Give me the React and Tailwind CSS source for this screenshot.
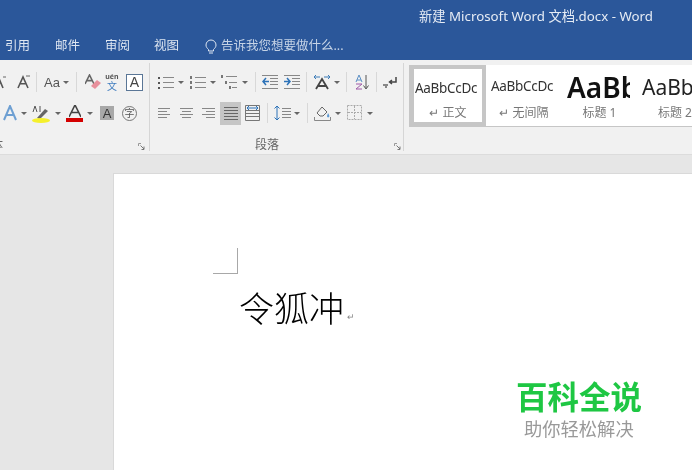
import React from "react";

const cjk = "font-['Noto_Sans','Noto_Sans_CJK_SC',sans-serif]";

const Caret = ({ className = "" }) => (
  <svg width="6" height="3" viewBox="0 0 6 3" className={`shrink-0 ${className}`}>
    <path d="M0 0h6L3 3z" fill="#666" />
  </svg>
);

const Sep = ({ className = "" }) => <div className={`w-px h-[20px] bg-[#d8d8d8] shrink-0 ${className}`} />;

const Icon = ({ w, h = 16, className = "", children }) => (
  <svg width={w} height={h} viewBox={`0 0 ${w} ${h}`} fill="none" className={`shrink-0 ${className}`}>
    {children}
  </svg>
);

const LetterA = ({ color = "#555", x = 0, w = 12, h = 13, y = 1 }) => (
  <path d={`M${x} ${y + h}L${x + w / 2} ${y}L${x + w} ${y + h}M${x + w * 0.2} ${y + h * 0.62}H${x + w * 0.8}`} stroke={color} strokeWidth="1.6" />
);

const Lines = ({ x = 0, w = 13, ys = [3, 6, 9, 12], widths, color = "#888" }) => (
  <>
    {ys.map((y, i) => (
      <path key={y} d={`M${x} ${y + 0.5}h${widths ? widths[i] : w}`} stroke={color} />
    ))}
  </>
);

const Launcher = ({ className = "" }) => (
  <svg width="7" height="7" viewBox="0 0 7 7" fill="none" className={`shrink-0 ${className}`}>
    <path d="M.5 3V.5H3M4 .5" stroke="#999" />
    <path d="M2.5 2.5L6 6M6 3.5V6.500H3.500" stroke="#777" />
  </svg>
);

function StyleItem({ selected, sample, label, box }) {
  return (
    <div className={`h-[61px] flex flex-col items-center shrink-0 ${box} ${selected ? "border-[4px] border-[#c6c6c6] bg-white" : ""}`}>
      <div className={`w-full h-[37px] flex items-center overflow-hidden whitespace-nowrap ${selected ? "pt-[1px] pl-[1px]" : "pt-[6px] pl-[5px]"}`}>
        {sample}
      </div>
      <div className={`text-[12px] leading-none text-[#777] whitespace-nowrap ${selected ? "mt-[1px]" : "mt-[5px]"} ${cjk}`}>{label}</div>
    </div>
  );
}

export default function App() {
  return (
    <div className={`w-[692px] h-[470px] overflow-hidden bg-[#e6e6e6] relative blur-[0.35px] ${cjk}`}>
      {/* Title bar and tabs */}
      <header className="h-[60px] bg-[#2b579a] text-[#dfe7f2] flex flex-col">
        <div className="h-[33px] pl-[419px] pt-[7px] text-[13.3px] leading-[18px] whitespace-nowrap text-[#e6ecf5]">
          新建 Microsoft Word 文档.docx - Word
        </div>
        <nav className="flex items-center h-[26px] text-[12.5px] whitespace-nowrap pl-[5px]">
          <span className="w-[50px]">引用</span>
          <span className="w-[50px]">邮件</span>
          <span className="w-[49px]">审阅</span>
          <span className="w-[51px]">视图</span>
          <Icon w={12} h={15}>
            <path d="M3.500 10.500C2 9 1 8 1 6a5 5 0 0 1 10 0c0 2-1 3-2.500 4.500V12h-5zM4 14h4" stroke="#dfe7f2" />
          </Icon>
          <span className="ml-[4px] text-[#c5d3e6] text-[12.500px]">告诉我您想要做什么...</span>
        </nav>
      </header>

      {/* Ribbon */}
      <section className="h-[95px] bg-[#f1f1f1] border-b border-[#dcdcdc] flex">
        {/* Font group */}
        <div className="w-[150px] shrink-0 border-r border-[#d6d6d6] my-[3px] flex flex-col overflow-hidden relative">
          <div className="h-[30px] mt-[4px] flex items-center">
            <Icon w={14} className="ml-[-8px]">
              <LetterA x={0} w={11} />
              <path d="M11 3h3" stroke="#666" />
            </Icon>
            <Icon w={14} className="ml-[11px]">
              <LetterA x={1} w={10} y={3} h={11} />
              <path d="M9 2h4" stroke="#666" />
            </Icon>
            <Sep className="ml-[5px]" />
            <span className="ml-[7px] text-[13px] leading-none text-[#555] font-['Liberation_Sans',sans-serif]">Aa</span>
            <Caret className="ml-[3px]" />
            <Sep className="ml-[7px]" />
            <Icon w={17} className="ml-[8px]">
              <LetterA x={0} w={9} h={9} color="#666" />
              <path d="M6 12l6-6 4 3-6 6z" fill="#e8909c" />
            </Icon>
            <div className="ml-[3px] w-[14px] flex flex-col items-center">
              <span className="text-[7px] leading-[8px] font-bold text-[#555]">uén</span>
              <span className="text-[10px] leading-[11px] text-[#3f7cbf]">文</span>
            </div>
            <div className="ml-[7px] w-[17px] h-[17px] border border-[#5a7696] bg-white flex items-center justify-center text-[14px] leading-none text-[#444] font-['Liberation_Sans',sans-serif]">A</div>
          </div>
          <div className="h-[30px] mt-[1px] flex items-center">
            <Icon w={14} className="ml-[3px]">
              <path d="M1 15L7 1l6 14M4 10h6" stroke="#6d9fd2" strokeWidth="2" />
            </Icon>
            <Caret className="ml-[4px]" />
            <Icon w={18} h={20} className="ml-[5px]">
              <path d="M5 15l8-9 3 2-8 8z" fill="#666" />
              <path d="M1 9l2-6 2 6M8 3v6" stroke="#555" />
              <ellipse cx="9" cy="17.500" rx="9" ry="2.500" fill="#f5f02c" />
            </Icon>
            <Caret className="ml-[5px]" />
            <div className="ml-[5px] w-[17px] flex flex-col items-center">
              <Icon w={12} h={13}>
                <LetterA x={0} w={12} y={0} h={12} color="#444" />
              </Icon>
              <div className="w-[17px] h-[4px] bg-[#d40000]" />
            </div>
            <Caret className="ml-[4px]" />
            <div className="ml-[7px] w-[14px] h-[14px] bg-[#a8a8a8] flex items-center justify-center text-[13px] leading-none text-[#333] font-['Liberation_Sans',sans-serif]">A</div>
            <div className="ml-[8px] w-[15px] h-[15px] rounded-full border border-[#777] flex items-center justify-center text-[10px] leading-none text-[#555]">字</div>
          </div>
          <div className="flex-1 flex items-center justify-between pr-[4px] pt-[10px]">
            <span className="ml-[-9px] text-[12px] leading-none text-[#666]">体</span>
            <Launcher className="mt-[4px]" />
          </div>
        </div>

        {/* Paragraph group */}
        <div className="w-[254px] shrink-0 border-r border-[#d6d6d6] my-[3px] flex flex-col">
          <div className="h-[30px] mt-[4px] flex items-center">
            <Icon w={17} className="ml-[7px]">
              <path d="M1 3h2v2H1zM1 8h2v2H1zM1 13h2v2H1z" fill="#555" />
              <Lines x={6} w={11} ys={[3, 8, 13]} />
            </Icon>
            <Caret className="ml-[4px]" />
            <Icon w={17} className="ml-[5px]">
              <path d="M1 2h2v3H1zM1 7h2v3H1zM1 12h2v3H1z" fill="#777" />
              <Lines x={6} w={11} ys={[3, 8, 13]} />
            </Icon>
            <Caret className="ml-[4px]" />
            <Icon w={17} className="ml-[5px]">
              <path d="M0 1h2v3H0zM4 7h2v3H4zM8 12h2v3H8z" fill="#777" />
              <Lines ys={[2, 8, 13]} x={5} widths={[11, 0, 0]} />
              <path d="M8 8.500h8M11 13.500h5" stroke="#888" />
            </Icon>
            <Caret className="ml-[4px]" />
            <Sep className="ml-[7px]" />
            <Icon w={17} className="ml-[6px]">
              <Lines x={0} w={16} ys={[1, 14]} />
              <Lines x={8} w={8} ys={[4, 7, 10]} />
              <path d="M7 7.500H1M4 4L1 7.500 4 11" stroke="#2c72b8" strokeWidth="1.500" />
            </Icon>
            <Icon w={17} className="ml-[5px]">
              <Lines x={0} w={16} ys={[1, 14]} />
              <Lines x={8} w={8} ys={[4, 7, 10]} />
              <path d="M0 7.500h6M3 4l3 3.500L3 11" stroke="#2c72b8" strokeWidth="1.500" />
            </Icon>
            <Sep className="ml-[5px]" />
            <Icon w={18} className="ml-[6px]">
              <path d="M3 15L9 5l6 10M5.500 12h7" stroke="#444" strokeWidth="1.800" />
              <path d="M1 3h6M1 3l2-2M1 3l2 2M11 3h6M17 3l-2-2M17 3l-2 2" stroke="#3d7cb8" />
            </Icon>
            <Caret className="ml-[3px]" />
            <Sep className="ml-[6px]" />
            <Icon w={15} className="ml-[8px]">
              <path d="M1 8l3-7 3 7M2 6h4" stroke="#5b8fc4" />
              <path d="M1 10h6L1 15h6" stroke="#a05ba8" />
              <path d="M11 1v13M8.500 11.500L11 15l2.500-3.500" stroke="#555" />
            </Icon>
            <Sep className="ml-[6px]" />
            <Icon w={16} className="ml-[5px]">
              <path d="M14 3v5H8M10 6L7.500 8l2.500 2" stroke="#444" strokeWidth="1.500" />
              <path d="M1 11h5M3 13h2" stroke="#666" strokeWidth="1.500" />
            </Icon>
          </div>
          <div className="h-[30px] mt-[1px] flex items-center">
            <Icon w={13} className="ml-[8px]">
              <Lines w={12} ys={[3, 6, 9, 12]} widths={[12, 9, 12, 9]} />
            </Icon>
            <Icon w={13} className="ml-[9px]">
              <Lines ys={[3, 9]} w={13} />
              <path d="M2 6.500h9M2 12.500h9" stroke="#888" />
            </Icon>
            <Icon w={13} className="ml-[9px]">
              <Lines ys={[3, 9]} w={13} />
              <path d="M4 6.500h9M4 12.500h9" stroke="#888" />
            </Icon>
            <div className="ml-[5px] w-[21px] h-[23px] bg-[#c6c6c6] flex items-center justify-center">
              <Icon w={14}>
                <Lines w={14} ys={[2, 5, 8, 11, 14]} color="#666" />
              </Icon>
            </div>
            <Icon w={15} className="ml-[4px]">
              <path d="M.5 .5h14v15H.5zM1 5.500h13M1 8.500h13M1 11.500h13" stroke="#777" />
              <path d="M2 3h11M2 3l2-2M2 3l2 2M13 3l-2-2M13 3l-2 2" stroke="#2c72b8" />
            </Icon>
            <Sep className="ml-[7px]" />
            <Icon w={17} className="ml-[6px]">
              <path d="M3 1v14M.5 3.500L3 1l2.500 2.500M.5 12.500L3 15l2.500-2.500" stroke="#2c72b8" />
              <Lines x={8} w={9} ys={[3, 6, 9, 12]} />
            </Icon>
            <Caret className="ml-[3px]" />
            <Sep className="ml-[7px]" />
            <Icon w={17} className="ml-[6px]">
              <path d="M3 8l5-6 5 5-4 4H6z" stroke="#666" />
              <path d="M14 8c1 2 2 3 1 4s-2 0-2-1z" fill="#5d9ad4" />
              <path d="M.5 12v3.500h16V12" stroke="#888" />
            </Icon>
            <Caret className="ml-[4px]" />
            <Icon w={15} className="ml-[6px]">
              <path d="M.5 .5h14v14H.5zM7.500 1v13M1 7.500h13" stroke="#aaa" strokeDasharray="2 1" />
            </Icon>
            <Caret className="ml-[5px]" />
          </div>
          <div className="flex-1 flex items-center pt-[10px]">
            <span className="ml-[105px] text-[12px] leading-none text-[#666]">段落</span>
            <Launcher className="ml-[115px] mt-[4px]" />
          </div>
        </div>

        {/* Styles gallery */}
        <div className="ml-[5px] mt-[5px] h-[62px] flex-1 flex bg-white border-b border-l border-[#c6c6c6] overflow-hidden">
          <StyleItem
            selected
            box="w-[76px]"
            sample={<span className="text-[13.500px] tracking-[-0.3px] text-[#333] w-[65px] overflow-hidden">AaBbCcDc</span>}
            label="↵ 正文"
          />
          <StyleItem
            box="w-[76px]"
            sample={<span className="text-[13.500px] tracking-[-0.3px] text-[#333] w-[65px] overflow-hidden">AaBbCcDc</span>}
            label="↵ 无间隔"
          />
          <StyleItem
            box="w-[75px]"
            sample={<span className="text-[28px] leading-[32px] font-semibold text-[#111] w-[63px] overflow-hidden">AaBb</span>}
            label="标题 1"
          />
          <StyleItem
            box="w-[76px]"
            sample={<span className="text-[21px] leading-[26px] text-[#222] w-[66px] overflow-hidden">AaBbC</span>}
            label="标题 2"
          />
        </div>
      </section>

      {/* Document page */}
      <main className="mt-[18px] ml-[113px] h-[320px] bg-white border-l border-t border-[#d9d9d9] pt-[74px] pl-[99px]">
        <div className="w-[25px] h-[26px] border-r border-b border-[#a8a8a8]" />
        <div className="mt-[11px] ml-[26px] flex items-end text-[35px] leading-[44px] font-light text-black font-['Noto_Sans_CJK_SC',sans-serif] whitespace-nowrap">
          令狐冲
          <span className="ml-[3px] mb-[8px] text-[9px] leading-none text-[#888]">↵</span>
        </div>
      </main>

      {/* Watermark */}
      <div className="absolute left-[516px] top-[376px] flex flex-col whitespace-nowrap">
        <span className="text-[31.500px] leading-[38px] font-bold text-[#1ec743] font-['Noto_Sans_CJK_SC',sans-serif]">百科全说</span>
        <span className="ml-[8px] mt-[3px] text-[18.300px] leading-[22px] text-[#999] font-['Noto_Sans_CJK_SC',sans-serif]">助你轻松解决</span>
      </div>
    </div>
  );
}
